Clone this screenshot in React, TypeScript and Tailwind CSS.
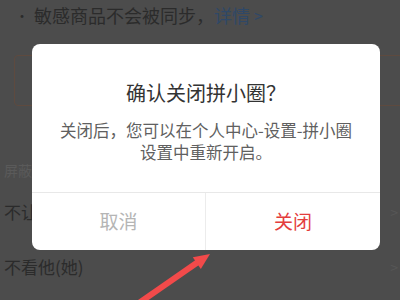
export default function App() {
  const font = { fontFamily: '"Noto Sans CJK SC", "Noto Sans", sans-serif' };

  return (
    <div className="relative w-[400px] h-[300px] overflow-hidden bg-[#4c4c4c]" style={font}>
      {/* page under the dimmed overlay */}
      <div className="flex flex-col">
        <div className="flex items-center h-[30px] pl-[15px] text-[18px] text-[#2b2b2b]">
          <span className="mr-[5px] text-[14px]">·</span>
          <span>敏感商品不会被同步，</span>
          <span className="text-[#2f4867]">详情</span>
          <span className="ml-[4px] text-[#2f4867] text-[16px]">&gt;</span>
        </div>
        <div className="ml-[14px] mt-[25px] h-[51px] w-[400px] rounded-[4px] border border-[#5e4a3f]" />
        <div className="mt-[54px] pl-[4px] h-[20px] leading-[20px] text-[14px] text-[#5a5a5a]">屏蔽设置</div>
        <div className="mt-[20px] flex justify-between pl-[4px] pr-[2px] h-[24px] leading-[24px] text-[17px] text-[#2b2b2b]">
          <span>不让他(她)看</span>
          <span className="text-[#575757] text-[14px]">&gt;</span>
        </div>
        <div className="mt-[31px] flex justify-between pl-[4px] pr-[2px] h-[24px] leading-[24px] text-[17px] text-[#2b2b2b]">
          <span>不看他(她)</span>
          <span className="text-[#575757] text-[14px]">&gt;</span>
        </div>
      </div>

      {/* dialog */}
      <div className="absolute left-[32px] top-[44px] w-[348px] h-[206px] bg-white rounded-[8px] flex flex-col">
        <div className="h-[148px] flex flex-col items-center">
          <div className="mt-[35px] text-[20px] leading-[28px] text-[#333333]">确认关闭拼小圈？</div>
          <div className="mt-[12px] text-[16.5px] leading-[22px] text-[#606060] text-center">
            关闭后，您可以在个人中心-设置-拼小圈
            <br />
            设置中重新开启。
          </div>
        </div>
        <div className="flex flex-1 border-t border-[#e8e8e8]">
          <div className="w-[174px] flex items-center justify-center text-[19px] text-[#b5b5b5] border-r border-[#ececec]">
            取消
          </div>
          <div className="flex-1 flex items-center justify-center text-[19px] text-[#e43d3d]">关闭</div>
        </div>
      </div>

      {/* annotation arrow */}
      <svg className="absolute left-0 top-0" width="400" height="300" viewBox="0 0 400 300">
        <line x1="126" y1="312" x2="198" y2="262" stroke="#f24a4a" strokeWidth="6" />
        <polygon points="210,254 192.8,257.3 200.8,268.9" fill="#f24a4a" />
      </svg>
    </div>
  );
}
